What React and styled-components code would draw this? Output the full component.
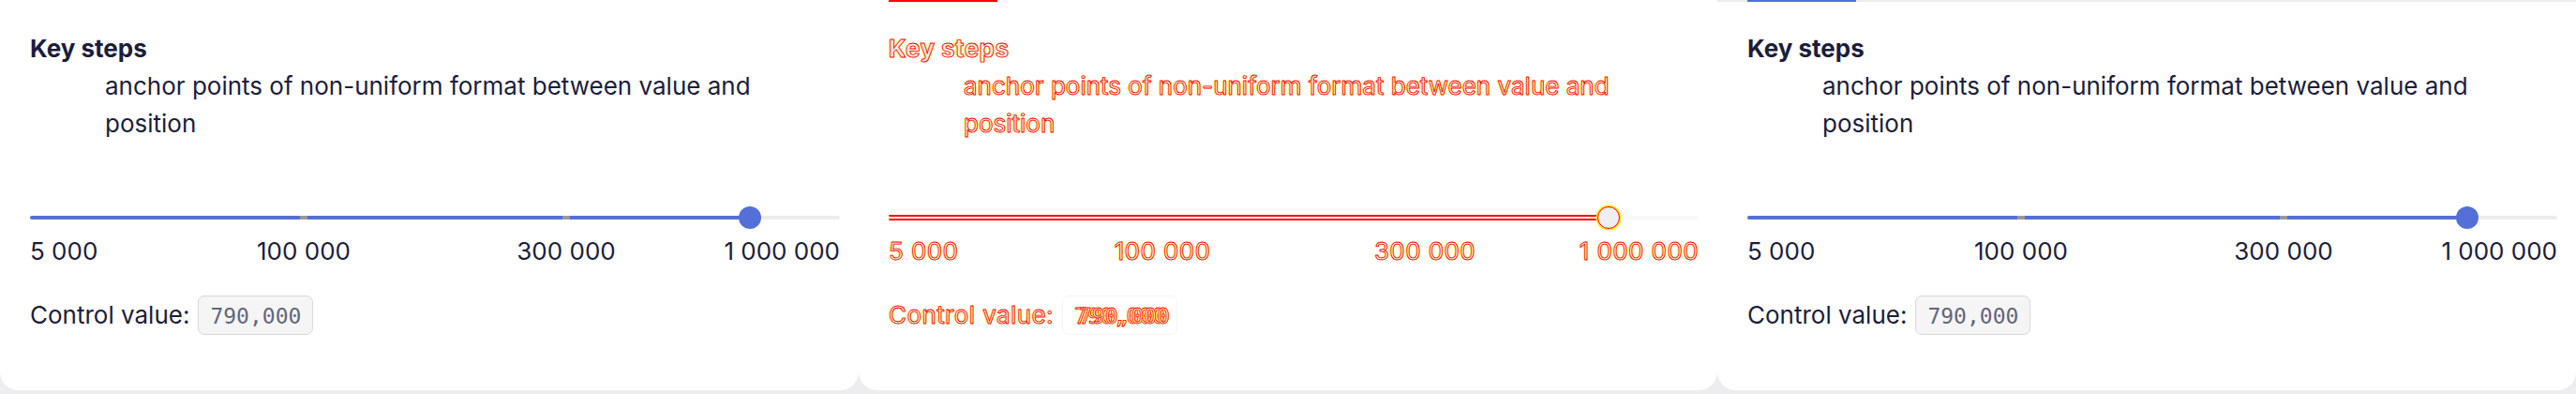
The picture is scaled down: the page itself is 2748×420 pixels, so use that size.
import React from 'react';
import styled, { createGlobalStyle, css } from 'styled-components';

const GlobalStyle = createGlobalStyle`
  html, body {
    margin: 0;
    padding: 0;
    background: #ededef;
  }
  body {
    font-family: Inter, "Noto Sans", sans-serif;
  }
`;

const steps = [
  { value: 5000, label: '5 000' },
  { value: 100000, label: '100 000' },
  { value: 300000, label: '300 000' },
  { value: 1000000, label: '1 000 000' },
];

const THUMB = 24;
const RAIL = 864;
const SPAN = RAIL - THUMB;

// place a value on the non-uniform scale: each step gets an equal share
const toPos = (v) => {
  const n = steps.length - 1;
  for (let i = 0; i < n; i++) {
    const a = steps[i].value;
    const b = steps[i + 1].value;
    if (v <= b) return (i + (v - a) / (b - a)) / n;
  }
  return 1;
};

const px = (p) => THUMB / 2 + p * SPAN;

const diffText = css`
  color: #ededed;
  -webkit-text-stroke: 0.8px #ff0000;
  text-shadow: 1px 0 0 #ffee00, -1px 0 0 #ffee00;
  letter-spacing: 0.4px;
`;

const Row = styled.div`
  display: grid;
  grid-template-columns: repeat(3, 916px);
  height: 420px;
  overflow: hidden;
`;

const Card = styled.section`
  height: 416px;
  background: #fff;
  border-radius: 0 0 20px 20px;
  color: #1c1e3b;
  display: flex;
  flex-direction: column;
`;

const TabLine = styled.div`
  height: 2px;
  display: flex;
  padding-left: 32px;
  background: ${(p) => p.$rail};
`;

const Indicator = styled.span`
  width: 116px;
  background: ${(p) => p.$color};
`;

const Body = styled.div`
  padding: 30px 20px 0 32px;
`;

const List = styled.dl`
  margin: 0;
  font-size: 26px;
  line-height: 40px;
`;

const Term = styled.dt`
  font-weight: 700;
  ${(p) => p.$diff && diffText}
`;

const Desc = styled.dd`
  margin: 0 0 0 80px;
  max-width: 720px;
  ${(p) => p.$diff && diffText}
  ${(p) => p.$diff && 'letter-spacing: 0;'}
`;

const Slider = styled.div`
  position: relative;
  height: ${THUMB}px;
  margin-top: 68px;
`;

const Rail = styled.div`
  position: absolute;
  left: 0;
  right: 0;
  top: 10px;
  height: 4px;
  border-radius: 2px;
  background: ${(p) => (p.$diff ? '#f8f8f8' : '#ececec')};
`;

const Fill = styled.div`
  position: absolute;
  left: 0;
  top: 10px;
  height: 4px;
  border-radius: 2px;
  background: #5470d8;
  ${(p) =>
    p.$diff &&
    css`
      top: 9px;
      height: 6px;
      box-sizing: border-box;
      background: #fff;
      border-top: 2px solid #ff0000;
      border-bottom: 2px solid #ff0000;
      border-left: 1px solid #ffe600;
      border-radius: 0;
    `}
`;

const Mark = styled.span`
  position: absolute;
  top: 10px;
  width: 8px;
  height: 4px;
  margin-left: -4px;
  background: ${(p) => (p.$diff ? 'transparent' : '#999999')};
`;

const Thumb = styled.span`
  position: absolute;
  top: 0;
  width: ${THUMB}px;
  height: ${THUMB}px;
  margin-left: -${THUMB / 2}px;
  box-sizing: border-box;
  border-radius: 50%;
  background: #5470d8;
  ${(p) =>
    p.$diff &&
    css`
      background: #efefef;
      border: 1px solid #ff0000;
      box-shadow: 0 0 0 1.5px #ffe600;
    `}
`;

const Labels = styled.div`
  position: relative;
  height: 40px;
  margin-top: 4px;
  font-size: 26px;
  line-height: 40px;
`;

const Label = styled.span`
  position: absolute;
  top: 0;
  white-space: nowrap;
  ${(p) => p.$edge === 'start' && 'left: 0;'}
  ${(p) => p.$edge === 'end' && 'right: 0;'}
  ${(p) => p.$edge === 'mid' && 'transform: translateX(-50%);'}
  ${(p) => p.$diff && diffText}
`;

const Control = styled.div`
  display: flex;
  align-items: center;
  gap: 9px;
  margin-top: 27px;
  font-size: 26px;
  line-height: 40px;
`;

const Caption = styled.span`
  ${(p) => p.$diff && diffText}
`;

const ValueBox = styled.code`
  display: grid;
  height: 42px;
  box-sizing: border-box;
  padding: 2px 12px 0;
  border: 1px solid ${(p) => (p.$diff ? '#f4f4f4' : '#dadada')};
  border-radius: 7px;
  background: ${(p) => (p.$diff ? '#fff' : '#f5f5f6')};
  font-family: "DejaVu Sans Mono", "Liberation Mono", monospace;
  font-size: 23px;
  line-height: 38px;
  color: #62667a;
`;

const ValueText = styled.span`
  grid-area: 1 / 1;
  ${(p) => p.$diff && diffText}
  ${(p) => p.$diff && 'letter-spacing: 0;'}
  ${(p) => p.$shift && `transform: translateX(${p.$shift}px);`}
`;

function Panel({ variant }) {
  const diff = variant === 'diff';
  const value = 790000;
  const p = toPos(value);
  const tabRail = variant === 'tabbed' ? '#ececec' : 'transparent';
  const tabColor =
    variant === 'tabbed' ? '#5470d8' : diff ? '#ff0000' : 'transparent';

  return (
    <Card>
      <TabLine $rail={tabRail}>
        <Indicator $color={tabColor} />
      </TabLine>
      <Body>
        <List>
          <Term $diff={diff}>Key steps</Term>
          <Desc $diff={diff}>
            anchor points of non-uniform format between value and position
          </Desc>
        </List>

        <Slider>
          <Rail $diff={diff} />
          <Fill $diff={diff} style={{ width: px(p) }} />
          {steps.slice(1, -1).map((s) => (
            <Mark key={s.value} $diff={diff} style={{ left: px(toPos(s.value)) }} />
          ))}
          <Thumb $diff={diff} style={{ left: px(p) }} />
        </Slider>

        <Labels>
          {steps.map((s, i) => {
            const edge = i === 0 ? 'start' : i === steps.length - 1 ? 'end' : 'mid';
            return (
              <Label
                key={s.value}
                $edge={edge}
                $diff={diff}
                style={edge === 'mid' ? { left: px(toPos(s.value)) } : undefined}
              >
                {s.label}
              </Label>
            );
          })}
        </Labels>

        <Control>
          <Caption $diff={diff}>Control value:</Caption>
          <ValueBox $diff={diff}>
            <ValueText $diff={diff}>790,000</ValueText>
            {diff && (
              <ValueText $diff $shift={5}>
                790,000
              </ValueText>
            )}
          </ValueBox>
        </Control>
      </Body>
    </Card>
  );
}

export default function App() {
  return (
    <>
      <GlobalStyle />
      <Row>
        <Panel variant="plain" />
        <Panel variant="diff" />
        <Panel variant="tabbed" />
      </Row>
    </>
  );
}
